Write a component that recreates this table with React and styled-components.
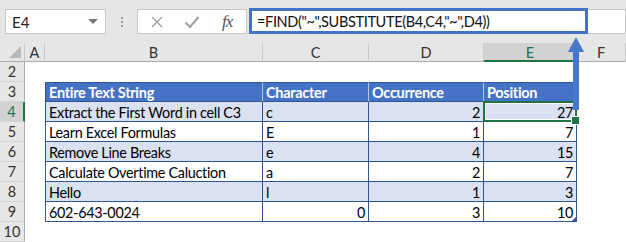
import React from 'react';
import styled, { createGlobalStyle, css } from 'styled-components';

const Global = createGlobalStyle`
  html, body { margin: 0; padding: 0; background: #fff; }
  body { font-family: Lato, "Liberation Sans", sans-serif; }
  * { box-sizing: border-box; }
`;

const Frame = styled.div`
  position: relative;
  width: 626px;
  height: 242px;
  overflow: hidden;
  background: #fff;
`;

const Toolbar = styled.div`
  height: 43px;
  background: #e6e6e6;
  display: flex;
  align-items: flex-start;
  padding: 9px 0 0 5px;
`;

const NameBox = styled.div`
  width: 101px;
  height: 25px;
  background: #fff;
  border: 1px solid #c6c6c6;
  display: flex;
  align-items: center;
  justify-content: space-between;
  padding: 0 7px 0 6px;
  font-size: 15px;
  color: #222;
`;

const Caret = styled.span`
  width: 0;
  height: 0;
  border-left: 5px solid transparent;
  border-right: 5px solid transparent;
  border-top: 5px solid #777;
`;

const Grip = styled.div`
  width: 31px;
  height: 25px;
  display: flex;
  flex-direction: column;
  align-items: center;
  justify-content: center;
  gap: 2px;
`;

const GripDot = styled.span`
  width: 2px;
  height: 2px;
  background: #9a9a9a;
`;

const ButtonBox = styled.div`
  width: 110px;
  height: 25px;
  background: #fff;
  border: 1px solid #c6c6c6;
  display: flex;
  align-items: center;
  padding-left: 12px;
  gap: 20px;
`;

const Fx = styled.span`
  font-family: "Liberation Serif", serif;
  font-style: italic;
  font-size: 17px;
  color: #555;
  letter-spacing: -1px;
  margin-left: 2px;
`;

const FormulaInput = styled.div`
  margin-left: 2px;
  width: 339px;
  height: 26px;
  margin-top: -1px;
  border: 3px solid #4472c4;
  background: #fff;
  display: flex;
  align-items: center;
  padding-left: 5px;
  font-size: 14.5px;
  letter-spacing: -0.35px;
  color: #111;
  white-space: nowrap;
`;

const FormulaRest = styled.div`
  flex: 1;
  height: 25px;
  background: #fff;
  border: 1px solid #c6c6c6;
  border-left: none;
`;

const Sheet = styled.div`
  display: grid;
  grid-template-columns: 25px 20px 218px 106px 115px 93px 1fr;
  grid-template-rows: 19px repeat(9, 20px);
  font-size: 14.5px;
`;

const Corner = styled.div`
  position: relative;
  background: #e6e6e6;
  border-right: 1px solid #c8c8c8;
  border-bottom: 1px solid #ababab;
  &::after {
    content: '';
    position: absolute;
    right: 3px;
    bottom: 3px;
    border-left: 12px solid transparent;
    border-bottom: 12px solid #b7b7b7;
  }
`;

const ColHeader = styled.div`
  background: ${p => (p.$active ? '#d2d2d2' : '#e6e6e6')};
  color: ${p => (p.$active ? '#217346' : '#333')};
  border-right: 1px solid #c8c8c8;
  border-bottom: ${p => (p.$active ? '2px solid #217346' : '1px solid #ababab')};
  display: flex;
  align-items: center;
  justify-content: center;
  padding-top: 1px;
`;

const RowHeader = styled.div`
  background: ${p => (p.$active ? '#d2d2d2' : '#e6e6e6')};
  color: ${p => (p.$active ? '#217346' : '#333')};
  border-right: ${p => (p.$active ? '2px solid #217346' : '1px solid #ababab')};
  border-bottom: 1px solid #d4d4d4;
  display: flex;
  align-items: center;
  justify-content: center;
`;

const Cell = styled.div`
  position: relative;
  display: flex;
  align-items: center;
  justify-content: ${p => (p.$num ? 'flex-end' : 'flex-start')};
  padding: 1px 3px 0 3px;
  white-space: nowrap;
  color: #000;
  font-size: 14.4px;
  letter-spacing: -0.3px;
  ${p => p.$kind === 'empty' && css`
    background: #fff;
  `}
  ${p => p.$kind === 'head' && css`
    background: #4472c4;
    color: #fff;
    font-weight: 700;
    font-size: 14.5px;
    letter-spacing: -0.3px;
    border-right: 1px solid #b4c6e7;
    border-bottom: 1px solid #2f5597;
    border-top: 1px solid #2f5597;
  `}
  ${p => (p.$kind === 'band' || p.$kind === 'plain') && css`
    background: ${p.$kind === 'band' ? '#d9e1f2' : '#fff'};
    border-right: 1px solid #2f5597;
    border-bottom: 1px solid #2f5597;
  `}
  ${p => p.$first && css`
    border-left: 1px solid #2f5597;
  `}
  ${p => p.$last && p.$kind === 'head' && css`
    border-right: 1px solid #2f5597;
  `}
  ${p => p.$selected && css`
    &::after {
      content: '';
      position: absolute;
      top: -1px;
      left: -1px;
      right: -1px;
      bottom: -1px;
      border: 2px solid #217346;
      box-shadow: inset 0 0 0 1px #fff;
      z-index: 2;
    }
    &::before {
      content: '';
      position: absolute;
      right: -4px;
      bottom: -4px;
      width: 7px;
      height: 7px;
      background: #217346;
      border: 1px solid #fff;
      z-index: 3;
    }
  `}
  ${p => p.$resize && css`
    &::after {
      content: '';
      position: absolute;
      right: 0;
      bottom: 0;
      border-left: 4px solid transparent;
      border-bottom: 4px solid #2f5597;
    }
  `}
`;

const Overlay = styled.svg`
  position: absolute;
  left: 0;
  top: 0;
  pointer-events: none;
  z-index: 5;
`;

const cols = ['A', 'B', 'C', 'D', 'E', 'F'];

const tableRows = [
  { n: 3, head: true, cells: ['Entire Text String', 'Character', 'Occurrence', 'Position'] },
  { n: 4, cells: ['Extract the First Word in cell C3', 'c', 2, 27] },
  { n: 5, cells: ['Learn Excel Formulas', 'E', 1, 7] },
  { n: 6, cells: ['Remove Line Breaks', 'e', 4, 15] },
  { n: 7, cells: ['Calculate Overtime Caluction', 'a', 2, 7] },
  { n: 8, cells: ['Hello', 'l', 1, 3] },
  { n: 9, cells: ['602-643-0024', 0, 3, 10] },
];

const XIcon = () => (
  <svg width="14" height="14" viewBox="0 0 14 14">
    <path d="M2 2 L12 12 M12 2 L2 12" stroke="#a0a0a0" strokeWidth="1.4" fill="none" />
  </svg>
);

const CheckIcon = () => (
  <svg width="16" height="14" viewBox="0 0 16 14">
    <path d="M1.5 7.5 L6 12 L14.5 2" stroke="#a0a0a0" strokeWidth="2" fill="none" />
  </svg>
);

function renderRow(rowNum, data) {
  const out = [];
  const activeRow = rowNum === 4;
  out.push(<RowHeader key={`rh${rowNum}`} $active={activeRow}>{rowNum}</RowHeader>);
  out.push(<Cell key={`a${rowNum}`} $kind="empty" />);
  if (!data) {
    for (let i = 0; i < 5; i++) out.push(<Cell key={`e${rowNum}-${i}`} $kind="empty" />);
    return out;
  }
  const kind = data.head ? 'head' : rowNum % 2 === 0 ? 'band' : 'plain';
  data.cells.forEach((v, i) => {
    out.push(
      <Cell
        key={`c${rowNum}-${i}`}
        $kind={kind}
        $num={typeof v === 'number'}
        $first={i === 0}
        $last={i === 3}
        $selected={rowNum === 4 && i === 3}
        $resize={rowNum === 9 && i === 3}
      >
        {v}
      </Cell>
    );
  });
  out.push(<Cell key={`f${rowNum}`} $kind="empty" />);
  return out;
}

export default function App() {
  const rows = [];
  rows.push(...renderRow(2, null));
  tableRows.forEach(r => rows.push(...renderRow(r.n, r)));
  rows.push(...renderRow(10, null));

  return (
    <Frame>
      <Global />
      <Toolbar>
        <NameBox>
          <span>E4</span>
          <Caret />
        </NameBox>
        <Grip>
          <GripDot />
          <GripDot />
          <GripDot />
        </Grip>
        <ButtonBox>
          <XIcon />
          <CheckIcon />
          <Fx>fx</Fx>
        </ButtonBox>
        <FormulaInput>=FIND("~",SUBSTITUTE(B4,C4,"~",D4))</FormulaInput>
        <FormulaRest />
      </Toolbar>
      <Sheet>
        <Corner />
        {cols.map(c => (
          <ColHeader key={c} $active={c === 'E'}>{c}</ColHeader>
        ))}
        {rows}
      </Sheet>
      <Overlay width="626" height="242" viewBox="0 0 626 242">
        <rect x="573" y="50" width="6" height="60" fill="#4878cc" />
        <polygon points="576,37 584,52 568,52" fill="#4878cc" />
      </Overlay>
    </Frame>
  );
}
